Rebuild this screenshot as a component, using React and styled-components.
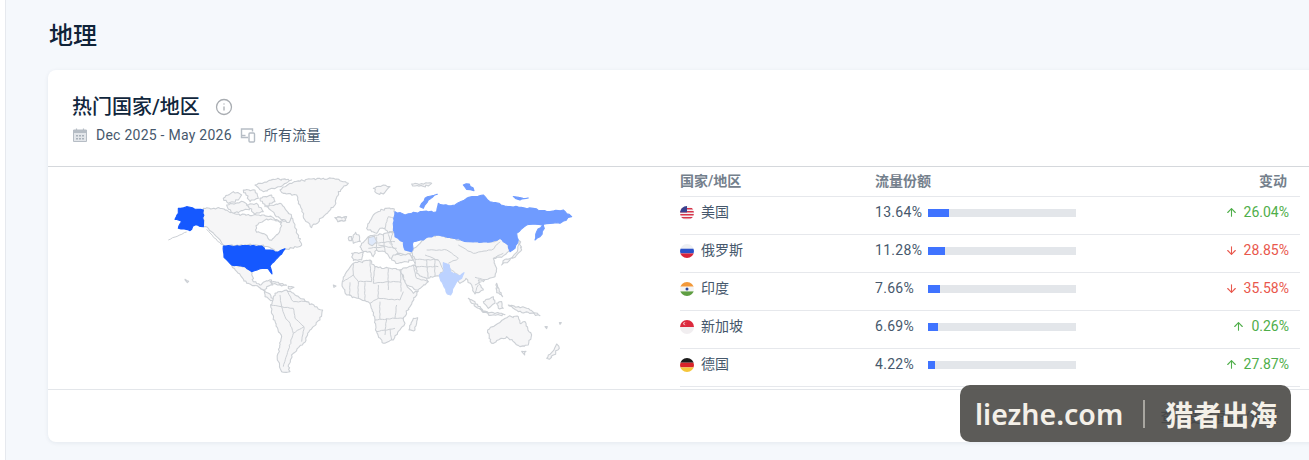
import React from "react";
import styled, { createGlobalStyle } from "styled-components";
import { ArrowUp, ArrowDown, Info } from "lucide-react";

const rows = [
  { flag: "us", name: "美国", share: 13.64, change: "26.04%", up: true },
  { flag: "ru", name: "俄罗斯", share: 11.28, change: "28.85%", up: false },
  { flag: "in", name: "印度", share: 7.66, change: "35.58%", up: false },
  { flag: "sg", name: "新加坡", share: 6.69, change: "0.26%", up: true },
  { flag: "de", name: "德国", share: 4.22, change: "27.87%", up: true },
];

const GlobalStyle = createGlobalStyle`
  html, body {
    margin: 0;
    height: 460px;
    overflow: hidden;
    background: #f5f8fc;
    font-family: Roboto, "Noto Sans CJK SC", sans-serif;
  }
`;

const Page = styled.div`
  position: relative;
  display: flex;
  width: 1309px;
  height: 460px;
  overflow: hidden;
`;

const Rail = styled.div`
  flex: 0 0 5px;
  background: #fff;
  border-right: 1px solid #e6e9ee;
`;

const Main = styled.main`
  flex: 1;
  min-width: 0;
  padding: 19px 0 0 42px;
`;

const Heading = styled.h1`
  margin: 0 0 17px 1px;
  height: 34px;
  font-size: 24px;
  line-height: 34px;
  font-weight: 500;
  color: #0f2338;
`;

const Card = styled.section`
  width: 1320px;
  height: 372px;
  background: #fff;
  border-radius: 8px;
  box-shadow: 0 1px 4px rgba(30, 50, 80, 0.08);
`;

const CardHead = styled.header`
  height: 97px;
  box-sizing: border-box;
  padding: 24px 24px 0;
  border-bottom: 1px solid #d5d8dc;
`;

const TitleRow = styled.div`
  display: flex;
  align-items: center;
  gap: 15px;
  height: 26px;
  color: #a8acb1;
`;

const Title = styled.h2`
  margin: 0;
  font-size: 20px;
  line-height: 26px;
  font-weight: 500;
  color: #10263c;
`;

const Meta = styled.div`
  display: flex;
  align-items: center;
  margin-top: 5px;
  height: 20px;
  font-size: 14px;
  letter-spacing: 0.25px;
  color: #46586c;
`;

const MetaCjk = styled.span`
  padding-bottom: 2px;
`;

const MetaIcon = styled.svg`
  width: 16px;
  height: 16px;
  margin-right: 8px;
  margin-left: ${({ $gap }) => $gap || 0}px;
  flex: none;
`;

const CardBody = styled.div`
  display: grid;
  grid-template-columns: 632px 620px;
  height: 222px;
  border-bottom: 1px solid #e3e6ea;
`;

const MapSvg = styled.svg`
  display: block;
  width: 632px;
  height: 222px;
`;

const Table = styled.div`
  display: flex;
  flex-direction: column;
`;

const gridCols = "195px 1fr auto";

const HeadRow = styled.div`
  display: grid;
  grid-template-columns: ${gridCols};
  align-items: center;
  height: 30px;
  box-sizing: border-box;
  padding: 0 13px 3px 0;
  border-bottom: 1px solid #e6e8ec;
  font-size: 14px;
  font-weight: 600;
  color: #74808c;
`;

const Row = styled.div`
  display: grid;
  grid-template-columns: ${gridCols};
  align-items: center;
  height: 38px;
  box-sizing: border-box;
  padding: 0 11px 6px 0;
  border-bottom: 1px solid #e6e8ec;
  font-size: 14px;
  color: #46586c;
`;

const Country = styled.div`
  display: flex;
  align-items: center;
  gap: 7px;
`;

const CountryName = styled.span`
  padding-bottom: 3px;
`;

const Share = styled.div`
  display: flex;
  align-items: center;
`;

const ShareValue = styled.span`
  width: 53px;
  padding-bottom: 1px;
  letter-spacing: 0.3px;
`;

const Track = styled.div`
  width: 148px;
  height: 8px;
  background: #e3e6ea;
`;

const Fill = styled.div`
  height: 100%;
  background: #3f73ff;
`;

const Change = styled.div`
  display: flex;
  align-items: center;
  justify-content: flex-end;
  gap: 6px;
  padding-bottom: 1px;
  color: ${({ $up }) => ($up ? "#4fae4a" : "#e9574c")};
`;

const CardFoot = styled.footer`
  display: flex;
  justify-content: flex-end;
  align-items: center;
  height: 52px;
  padding-right: 90px;
`;

const MoreLink = styled.a`
  font-size: 14px;
  font-weight: 500;
  white-space: nowrap;
  color: #1d3f72;
`;

const Watermark = styled.div`
  position: absolute;
  left: 960px;
  top: 385px;
  display: flex;
  align-items: center;
  width: 331px;
  height: 57px;
  box-sizing: border-box;
  padding-left: 15px;
  border-radius: 10px;
  background: rgba(74, 73, 70, 0.9);
  color: #f4f0e8;
  font-family: "Noto Sans", "Noto Sans CJK SC", sans-serif;
  font-size: 28.5px;
  font-weight: 600;
`;

const WatermarkBar = styled.span`
  width: 2px;
  height: 28px;
  margin: 0 20px;
  background: #a8a6a0;
`;

const WatermarkCjk = styled.span`
  font-size: 28px;
`;

const LAND = "#f6f6f7";
const EDGE = "#ccd0d5";

// breaks each straight edge into short wobbly steps so coasts do not look ruled
const roughen = (d, step = 6, amp = 3) => {
  let seed = 7;
  const wobble = () => {
    seed = (seed * 9301 + 49297) % 233280;
    return (seed / 233280 - 0.5) * 2 * amp;
  };
  return d
    .split("M")
    .filter((s) => s.trim())
    .map((sub) => {
      const closed = sub.includes("Z");
      const n = sub.match(/-?\d+(\.\d+)?/g).map(Number);
      const pts = [];
      for (let i = 0; i < n.length; i += 2) pts.push([n[i], n[i + 1]]);
      if (closed) pts.push(pts[0]);
      let out = `M${pts[0][0]} ${pts[0][1]}`;
      for (let i = 1; i < pts.length; i++) {
        const [ax, ay] = pts[i - 1];
        const [bx, by] = pts[i];
        const len = Math.hypot(bx - ax, by - ay);
        const parts = Math.max(1, Math.round(len / step));
        for (let k = 1; k < parts; k++) {
          const t = k / parts;
          out += `L${(ax + (bx - ax) * t + wobble()).toFixed(1)} ${(ay + (by - ay) * t + wobble()).toFixed(1)}`;
        }
        out += `L${bx} ${by}`;
      }
      return out + (closed ? "Z" : "");
    })
    .join("");
};

// map data is in 3x units, one group per anchor point on the map
const north = {
  at: [200, 175],
  land: [
    "M240 45 L270 25 L330 12 L400 10 L445 25 L415 50 L405 90 L370 125 L335 158 L315 135 L300 90 L290 60 L250 55Z",
    "M405 128 L440 125 L435 138 L415 140Z",
    "M10 100 L60 100 L110 118 L170 120 L215 125 L240 140 L278 130 L305 210 L280 220 L260 222 L240 235 L225 228 L190 210 L70 210 L50 185 L25 160 L10 155Z",
    "M70 70 L100 50 L125 60 L115 75 L85 85Z",
    "M80 90 L130 80 L150 100 L100 115Z",
    "M130 45 L165 45 L175 70 L150 80Z",
    "M165 30 L230 12 L275 15 L240 35 L190 50Z",
    "M180 70 L215 60 L225 80 L195 95Z",
    "M140 90 L170 85 L190 110 L165 118Z",
    "M200 95 L240 85 L275 125 L268 142 L240 130Z",
  ],
  bay: "M168 152 L200 132 L245 142 L238 172 L215 196 L192 176 L170 172Z",
};

const west = {
  at: [150, 170],
  land: [
    "M245 285 L285 290 L305 305 L310 335 L330 345 L350 332 L365 330 L368 345 L350 350 L345 365 L325 350 L290 340 L265 310Z",
    "M345 365 L360 372 L375 395 L362 392 L345 380Z",
    "M360 335 L385 337 L410 346 L395 348 L370 342Z",
    "M415 349 L432 352 L420 358Z",
    "M375 370 L410 360 L435 375 L470 395 L518 420 L510 450 L480 480 L460 520 L430 550 L415 590 L420 605 L395 605 L382 570 L395 500 L365 430 L362 405Z",
    "M105 328 L116 334 L112 338Z",
    "M550 345 L558 348 L552 352Z",
  ],
  lines: [
    "M390 375 L395 410 L430 415 L435 445 L462 470 L455 515",
    "M362 405 L395 410",
    "M395 410 L405 440 L420 460 L430 490 L415 540 L400 590",
    "M410 360 L430 395 L470 395",
    "M430 490 L462 470",
    "M325 350 L345 365",
    "M170 178 L215 225",
    "M55 210 L110 186",
  ],
};

const mid = {
  at: [335, 195],
  land: [
    "M0 68 L28 66 L32 76 L8 80Z",
    "M95 100 L115 60 L150 40 L178 42 L182 70 L178 105 L160 115 L150 100 L135 100 L125 115 L110 110Z",
    "M52 132 L62 112 L72 120 L76 140 L55 145Z",
    "M42 125 L50 125 L50 137 L42 137Z",
    "M75 155 L100 125 L130 120 L180 110 L215 150 L235 170 L215 180 L190 175 L165 190 L150 170 L125 165 L115 185 L105 170 L85 170Z",
    "M50 175 L85 172 L80 195 L55 197Z",
    "M175 180 L225 178 L235 195 L190 205 L170 195Z",
    "M22 260 L35 230 L55 205 L105 195 L120 215 L165 220 L195 225 L215 270 L235 295 L250 288 L225 335 L205 370 L210 385 L175 435 L145 445 L125 410 L120 375 L105 325 L70 310 L35 300 L25 280Z",
    "M195 225 L235 210 L265 240 L280 260 L250 285 L215 270Z",
    "M222 405 L235 370 L248 368 L240 405Z",
  ],
  lines: [
    "M55 205 L55 240 L25 260",
    "M105 195 L110 260 L70 260 L55 240",
    "M120 215 L115 265",
    "M160 220 L160 285",
    "M115 265 L160 260 L198 262",
    "M198 225 L198 290",
    "M70 310 L70 260",
    "M45 262 L45 302",
    "M90 262 L90 318",
    "M105 325 L130 310 L130 270",
    "M130 310 L195 315 L205 290",
    "M120 375 L180 370 L185 330",
    "M135 320 L135 372",
    "M155 370 L150 420",
    "M125 410 L180 400",
    "M180 370 L205 370",
    "M165 402 L170 435",
    "M150 100 L160 65 L178 70",
    "M125 125 L125 165",
    "M100 145 L180 140",
    "M145 120 L150 170",
    "M175 110 L165 145 L190 175",
    "M130 150 L185 160",
    "M160 118 L172 150",
    "M100 160 L150 155",
    "M235 210 L245 250 L280 260",
    "M225 178 L240 205 L265 240",
  ],
};

const east = {
  at: [360, 170],
  land: [
    "M155 245 L190 210 L205 200 L235 195 L280 205 L330 215 L395 215 L420 205 L445 225 L450 240 L425 262 L400 265 L410 295 L405 320 L370 335 L355 330 L370 360 L355 368 L345 372 L335 345 L318 325 L300 340 L285 320 L250 300 L238 318 L200 325 L170 310 L165 268Z",
    "M425 285 L435 268 L465 262 L485 240 L478 212 L472 245 L445 275Z",
    "M40 55 L70 45 L90 50 L70 72 L50 70Z",
    "M155 42 L215 40 L205 48 L165 48Z",
    "M325 385 L345 395 L370 425 L355 415 L335 400Z",
    "M365 423 L400 428 L435 434 L395 436Z",
    "M370 395 L400 380 L405 400 L385 415Z",
    "M410 340 L428 380 L410 368Z",
    "M410 400 L425 395 L430 415 L415 415Z",
    "M445 405 L500 415 L540 437 L505 427 L475 425Z",
    "M383 480 L415 460 L445 440 L475 440 L480 460 L495 455 L515 495 L505 525 L480 530 L440 500 L395 520Z",
    "M485 544 L498 544 L494 555Z",
    "M560 565 L582 540 L590 522 L598 535 L580 555 L568 568Z",
    "M555 470 L562 470 L560 476Z",
    "M598 458 L604 458 L600 463Z",
  ],
  lines: [
    "M200 240 L260 240 L295 265 L265 280",
    "M165 268 L235 270 L250 300",
    "M200 270 L205 325",
    "M195 255 L235 270",
    "M170 290 L235 290",
    "M225 270 L225 318",
    "M295 225 L340 250 L395 240 L420 215",
    "M250 278 L300 320",
    "M345 322 L375 330",
    "M345 345 L365 335",
    "M400 265 L430 250",
    "M345 370 L355 345",
  ],
};

const russia =
  "M100 180 L105 125 L135 135 L180 125 L230 125 L235 100 L250 105 L285 105 L320 85 L370 75 L390 95 L450 110 L520 115 L570 125 L610 120 L635 140 L600 160 L570 160 L545 165 L500 165 L470 190 L475 210 L465 235 L450 245 L445 225 L420 205 L395 215 L330 215 L280 205 L235 195 L205 200 L190 210 L160 215 L155 245 L135 240 L130 215 L105 200Z M180 110 L195 85 L232 73 L205 90 L190 115Z M310 45 L328 42 L342 62 L320 58Z M460 80 L505 84 L480 90Z M525 210 L530 185 L550 160 L553 175 L540 200Z";
const india =
  "M250 278 L268 285 L272 305 L300 318 L312 308 L305 325 L290 335 L282 350 L272 375 L262 372 L250 345 L240 325 L238 315 L252 305Z";
const usa =
  "M220 228 L335 228 L345 240 L360 240 L385 246 L405 236 L395 252 L378 268 L360 288 L366 312 L355 296 L330 296 L305 305 L285 290 L245 285 L222 262Z M85 115 L110 110 L160 120 L160 170 L135 165 L120 182 L85 175 L95 155 L75 148 L85 130Z";

const Land = styled.path`
  fill: ${({ $fill }) => $fill || LAND};
  stroke: ${({ $stroke }) => $stroke || EDGE};
  stroke-width: 1.1;
  stroke-linejoin: round;
  vector-effect: non-scaling-stroke;
`;

const Border = styled.path`
  fill: none;
  stroke: ${EDGE};
  stroke-width: 1;
  vector-effect: non-scaling-stroke;
`;

const Region = ({ at, land = [], lines = [], children }) => (
  <g transform={`translate(${at[0]} ${at[1]}) scale(0.3333)`}>
    {land.map((d, i) => (
      <Land key={i} d={roughen(d)} />
    ))}
    {lines.map((d, i) => (
      <Border key={i} d={roughen(d, 8, 1.6)} />
    ))}
    {children}
  </g>
);

const WorldMap = () => (
  <MapSvg viewBox="48 167 632 222">
    <Region {...north}>
      <Land d={roughen(north.bay)} $fill="#fff" />
    </Region>
    <Region {...west}>
      <Land d={roughen(usa, 8, 2)} $fill="#1558ff" $stroke="#1558ff" />
    </Region>
    <Region {...mid}>
      <Land d={roughen("M100 128 L118 124 L126 140 L112 152 L100 145Z", 8, 1)} $fill="#dfe9fb" />
    </Region>
    <Region {...east}>
      <Land d={roughen(india, 8, 1.2)} $fill="#bcd2ff" $stroke="#bcd2ff" />
      <Land d={roughen(russia, 9, 2.5)} $fill="#6f9bff" $stroke="#6f9bff" />
    </Region>
  </MapSvg>
);

const flags = {
  us: (
    <>
      <rect width="14" height="14" fill="#f2f2f4" />
      <path d="M0 2h14v1.4H0zM0 5h14v1.4H0zM0 8h14v1.4H0zM0 11h14v1.4H0z" fill="#d8344a" />
      <rect width="7" height="6.4" fill="#39408f" />
    </>
  ),
  ru: (
    <>
      <rect width="14" height="4.7" fill="#eef0f3" />
      <rect y="4.7" width="14" height="4.7" fill="#2a50c8" />
      <rect y="9.4" width="14" height="4.6" fill="#d8233a" />
    </>
  ),
  in: (
    <>
      <rect width="14" height="4.7" fill="#f2993a" />
      <rect y="4.7" width="14" height="4.7" fill="#f4f4f4" />
      <rect y="9.4" width="14" height="4.6" fill="#5f9e43" />
      <circle cx="7" cy="7" r="1.5" fill="#2c4a9c" />
    </>
  ),
  sg: (
    <>
      <rect width="14" height="7" fill="#dc2a3e" />
      <rect y="7" width="14" height="7" fill="#f1eef0" />
      <circle cx="5" cy="3.6" r="1.7" fill="#f6dfe0" />
      <circle cx="5.8" cy="3.6" r="1.5" fill="#dc2a3e" />
    </>
  ),
  de: (
    <>
      <rect width="14" height="4.7" fill="#1b1b1b" />
      <rect y="4.7" width="14" height="4.7" fill="#d8232a" />
      <rect y="9.4" width="14" height="4.6" fill="#f5c63a" />
    </>
  ),
};

const FlagSvg = styled.svg`
  width: 14px;
  height: 14px;
  border-radius: 50%;
  flex: none;
`;

const Flag = ({ code }) => <FlagSvg viewBox="0 0 14 14">{flags[code]}</FlagSvg>;

const CalendarIcon = () => (
  <MetaIcon viewBox="0 0 16 16">
    <path d="M1.5 3h13v11.5h-13z" fill="#e3e6ea" stroke="#b6bdc5" strokeWidth="1" />
    <path d="M1.5 3h13v3h-13z" fill="#b6bdc5" />
    <path d="M4.5 1.5v3M11.5 1.5v3" stroke="#b6bdc5" strokeWidth="1.2" />
    <path d="M4 8h2v1.5H4zM7 8h2v1.5H7zM10 8h2v1.5h-2zM4 11h2v1.5H4zM7 11h2v1.5H7zM10 11h2v1.5h-2z" fill="#a9b1ba" />
  </MetaIcon>
);

const DevicesIcon = () => (
  <MetaIcon viewBox="0 0 16 16" $gap={8}>
    <path d="M8 10.5H1.5V2h11v2.5" fill="none" stroke="#b6bdc5" strokeWidth="1.4" />
    <path d="M1.5 8.5h4" stroke="#b6bdc5" strokeWidth="1.4" />
    <rect x="9" y="6" width="5.5" height="9" rx="1" fill="#fff" stroke="#b6bdc5" strokeWidth="1.4" />
  </MetaIcon>
);

export default function App() {
  return (
    <Page>
      <GlobalStyle />
      <Rail />
      <Main>
        <Heading>地理</Heading>
        <Card>
          <CardHead>
            <TitleRow>
              <Title>热门国家/地区</Title>
              <Info size={18} strokeWidth={1.7} />
            </TitleRow>
            <Meta>
              <CalendarIcon />
              Dec 2025 - May 2026
              <DevicesIcon />
              <MetaCjk>所有流量</MetaCjk>
            </Meta>
          </CardHead>
          <CardBody>
            <WorldMap />
            <Table>
              <HeadRow>
                <span>国家/地区</span>
                <span>流量份额</span>
                <span>变动</span>
              </HeadRow>
              {rows.map((row) => (
                <Row key={row.flag}>
                  <Country>
                    <Flag code={row.flag} />
                    <CountryName>{row.name}</CountryName>
                  </Country>
                  <Share>
                    <ShareValue>{row.share.toFixed(2)}%</ShareValue>
                    <Track>
                      <Fill style={{ width: `${row.share * 1.55}px` }} />
                    </Track>
                  </Share>
                  <Change $up={row.up}>
                    {row.up ? <ArrowUp size={13} /> : <ArrowDown size={13} />}
                    {row.change}
                  </Change>
                </Row>
              ))}
            </Table>
          </CardBody>
          <CardFoot>
            <MoreLink>查看更多国家/地区</MoreLink>
          </CardFoot>
        </Card>
      </Main>
      <Watermark>
        liezhe.com
        <WatermarkBar />
        <WatermarkCjk>猎者出海</WatermarkCjk>
      </Watermark>
    </Page>
  );
}
